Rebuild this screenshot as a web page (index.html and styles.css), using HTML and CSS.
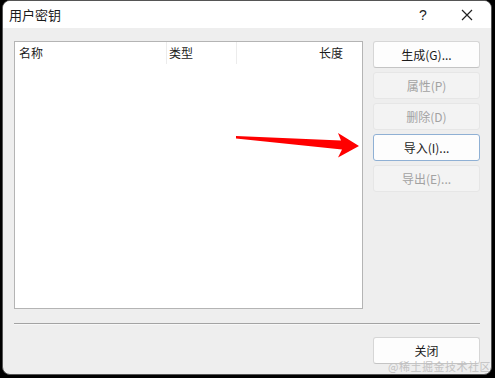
FILE: index.html
```html
<!DOCTYPE html>
<html lang="zh-CN">

<head>
    <meta charset="UTF-8">
    <title>用户密钥</title>
    <link rel="stylesheet" href="styles.css">
</head>

<body>
    <div class="window">
        <div class="titlebar">
            <span class="title">用户密钥</span>
            <span class="help">?</span>
            <span class="close">
                <svg width="12" height="12" viewBox="0 0 12 12">
                    <path d="M1 1L11 11M11 1L1 11" stroke="#222" stroke-width="1.2" fill="none" />
                </svg>
            </span>
        </div>
        <div class="content">
            <div class="main">
                <div class="list">
                    <div class="list-head">
                        <span class="col col-name">名称</span>
                        <span class="col col-type">类型</span>
                        <span class="col col-len">长度</span>
                    </div>
                </div>
                <div class="actions">
                    <button class="btn">生成(G)...</button>
                    <button class="btn disabled">属性(P)</button>
                    <button class="btn disabled">删除(D)</button>
                    <button class="btn focus">导入(I)...</button>
                    <button class="btn disabled">导出(E)...</button>
                </div>
            </div>
            <div class="divider"></div>
            <div class="footer">
                <button class="btn">关闭</button>
            </div>
            <div class="watermark">@稀土掘金技术社区</div>
        </div>
        <svg class="arrow" width="495" height="378" viewBox="0 0 495 378">
            <polygon points="236,136 341,140.5 338,133 359,146 338,157.5 342,149.5 236,138.5" fill="#ff0000" />
        </svg>
    </div>
</body>

</html>
```

FILE: styles.css
```css
* {
    margin: 0;
    padding: 0;
    box-sizing: border-box;
}

body {
    background: #000;
    width: 495px;
    height: 378px;
    overflow: hidden;
    font-family: "Noto Sans CJK SC", "Noto Sans", sans-serif;
    font-size: 12px;
    color: #1b1b1b;
}

.window {
    position: relative;
    margin: 0 3px 0 2px;
    height: 375px;
    background: #eeeeee;
    border-radius: 8px;
    overflow: hidden;
    border: 1px solid #555;
    display: flex;
    flex-direction: column;
}

.titlebar {
    height: 27px;
    background: #fff;
    display: flex;
    align-items: center;
    padding-left: 6px;
}

.title {
    flex: 1;
    font-size: 13px;
}

.help {
    width: 44px;
    text-align: center;
    font-size: 14px;
    font-family: "Liberation Sans", sans-serif;
}

.close {
    width: 44px;
    display: flex;
    justify-content: center;
    margin-right: 2px;
}

.content {
    flex: 1;
    padding: 13px 11px 0 11px;
    display: flex;
    flex-direction: column;
    position: relative;
}

.main {
    display: flex;
    gap: 10px;
}

.list {
    width: 350px;
    height: 268px;
    background: #fff;
    border: 1px solid #b4b4b4;
}

.list-head {
    display: flex;
    height: 22px;
    align-items: center;
}

.col {
    height: 22px;
    line-height: 22px;
    border-right: 1px solid #ececec;
}

.col-name {
    width: 152px;
    padding-left: 4px;
}

.col-type {
    width: 70px;
    padding-left: 2px;
}

.col-len {
    width: 106px;
    text-align: right;
    padding-right: 0;
    border-right: none;
}

.actions {
    display: flex;
    flex-direction: column;
    gap: 4px;
}

.btn {
    width: 107px;
    height: 27px;
    font-family: inherit;
    font-size: 12px;
    color: #1b1b1b;
    background: #fdfdfd;
    border: 1px solid #d6d6d6;
    border-bottom-color: #c4c4c4;
    border-radius: 3px;
}

.btn.disabled {
    background: #f3f3f3;
    border-color: #e6e6e6;
    color: #a2a2a2;
}

.btn.focus {
    border-color: #8fb0d4;
}

.divider {
    margin-top: 14px;
    height: 2px;
    background: #a3a3a3;
    border-bottom: 1px solid #f7f7f7;
}

.footer {
    display: flex;
    justify-content: flex-end;
    margin-top: 12px;
}

.watermark {
    position: absolute;
    right: 0;
    bottom: 0;
    font-size: 11px;
    color: #c2c2c2;
    letter-spacing: 0.5px;
}

.arrow {
    position: absolute;
    left: -3px;
    top: -1px;
    pointer-events: none;
}
```
